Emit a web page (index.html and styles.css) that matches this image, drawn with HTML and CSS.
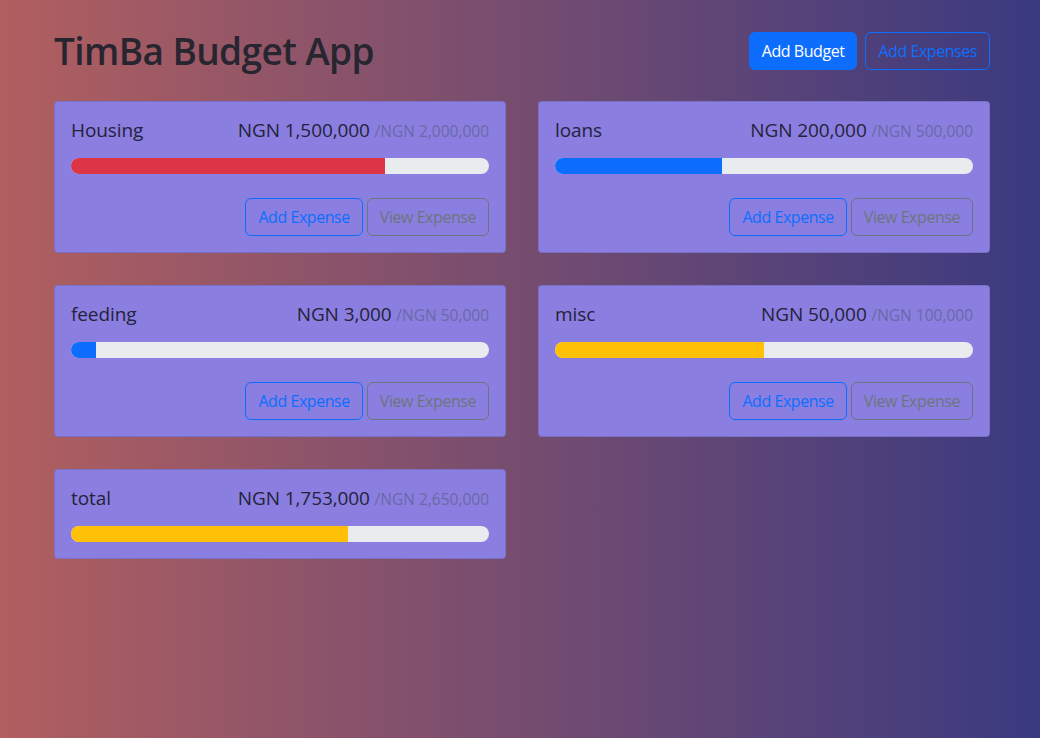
FILE: index.html
```html
<!DOCTYPE html>
<html lang="en">
<head>
<meta charset="utf-8">
<title>TimBa Budget App</title>
<link rel="stylesheet" href="styles.css">
</head>
<body>
<div class="container">
  <header class="header">
    <h1 class="title">TimBa Budget App</h1>
    <div class="actions">
      <button class="btn btn-primary">Add Budget</button>
      <button class="btn btn-outline-primary">Add Expenses</button>
    </div>
  </header>
  <main class="grid">
    <section class="card">
      <div class="card-head">
        <span class="name">Housing</span>
        <span class="amount">NGN 1,500,000 <span class="max">/NGN 2,000,000</span></span>
      </div>
      <div class="progress"><div class="bar bar-red" style="width:75%"></div></div>
      <div class="card-actions">
        <button class="btn btn-outline-primary">Add Expense</button>
        <button class="btn btn-outline-secondary">View Expense</button>
      </div>
    </section>
    <section class="card">
      <div class="card-head">
        <span class="name">loans</span>
        <span class="amount">NGN 200,000 <span class="max">/NGN 500,000</span></span>
      </div>
      <div class="progress"><div class="bar bar-blue" style="width:40%"></div></div>
      <div class="card-actions">
        <button class="btn btn-outline-primary">Add Expense</button>
        <button class="btn btn-outline-secondary">View Expense</button>
      </div>
    </section>
    <section class="card">
      <div class="card-head">
        <span class="name">feeding</span>
        <span class="amount">NGN 3,000 <span class="max">/NGN 50,000</span></span>
      </div>
      <div class="progress"><div class="bar bar-blue" style="width:6%"></div></div>
      <div class="card-actions">
        <button class="btn btn-outline-primary">Add Expense</button>
        <button class="btn btn-outline-secondary">View Expense</button>
      </div>
    </section>
    <section class="card">
      <div class="card-head">
        <span class="name">misc</span>
        <span class="amount">NGN 50,000 <span class="max">/NGN 100,000</span></span>
      </div>
      <div class="progress"><div class="bar bar-yellow" style="width:50%"></div></div>
      <div class="card-actions">
        <button class="btn btn-outline-primary">Add Expense</button>
        <button class="btn btn-outline-secondary">View Expense</button>
      </div>
    </section>
    <section class="card">
      <div class="card-head">
        <span class="name">total</span>
        <span class="amount">NGN 1,753,000 <span class="max">/NGN 2,650,000</span></span>
      </div>
      <div class="progress"><div class="bar bar-yellow" style="width:66.15%"></div></div>
    </section>
  </main>
</div>
</body>
</html>
```
FILE: styles.css
```css
* { box-sizing: border-box; }
html, body { margin: 0; padding: 0; }
body {
  min-height: 100vh;
  background: linear-gradient(to right, #b15f5f, #3a3a80);
  font-family: "Open Sans", "Noto Sans", sans-serif;
  color: #212529;
  font-size: 16px;
}
.container {
  width: 936px;
  margin-left: 54px;
}
.header {
  display: flex;
  align-items: center;
  justify-content: space-between;
  padding-top: 27px;
  margin-bottom: 26px;
}
.title {
  margin: 0;
  font-size: 37px;
  font-weight: 600;
  line-height: 48px;
  color: #27252f;
  letter-spacing: -0.6px;
}
.actions { display: flex; gap: 8px; }
.btn {
  font-family: inherit;
  font-size: 16px;
  line-height: 24px;
  padding: 6px 12px;
  border: 1px solid transparent;
  border-radius: 6px;
  background: transparent;
  letter-spacing: -0.45px;
  cursor: pointer;
}
.btn-primary { background: #0d6efd; border-color: #0d6efd; color: #fff; }
.btn-outline-primary { border-color: #0d6efd; color: #0d6efd; }
.btn-outline-secondary { border-color: #6c757d; color: #6c757d; }
.grid {
  display: grid;
  grid-template-columns: 1fr 1fr;
  gap: 32px;
  align-items: start;
}
.card {
  background: #8a7fe0;
  border: 1px solid rgba(0, 0, 0, 0.12);
  border-radius: 4px;
  padding: 16px;
}
.card-head {
  display: flex;
  justify-content: space-between;
  align-items: baseline;
  height: 24px;
  line-height: 24px;
  margin-bottom: 16px;
  color: #24223a;
}
.name { font-size: 19px; letter-spacing: -0.1px; }
.amount { font-size: 19px; letter-spacing: -0.1px; }
.max { font-size: 15.5px; color: #6c68a8; letter-spacing: 0; }
.progress {
  height: 16px;
  background: #e9ecef;
  border-radius: 8px;
  overflow: hidden;
  display: flex;
}
.bar { height: 100%; }
.bar-red { background: #dc3545; }
.bar-blue { background: #0d6efd; }
.bar-yellow { background: #ffc107; }
.card-actions {
  display: flex;
  justify-content: flex-end;
  gap: 4px;
  margin-top: 24px;
}
```
